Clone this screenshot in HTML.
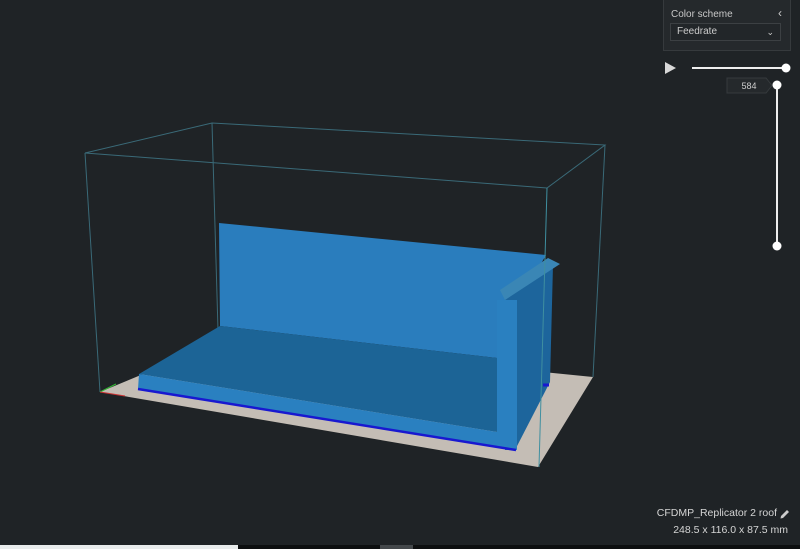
<!DOCTYPE html>
<html><head><meta charset="utf-8"><style>
html,body{margin:0;padding:0;background:#1f2326;width:800px;height:549px;overflow:hidden;font-family:"Liberation Sans",sans-serif;}
.panel{position:absolute;left:663px;top:-1px;width:126px;height:50px;background:#25292c;border:1px solid #363a3d;}
.lbl{position:absolute;left:7px;top:9px;font-size:10px;color:#c8c8c8;}
.chev{position:absolute;right:8px;top:6px;font-size:12px;color:#ccc;}
.sel{position:absolute;left:6px;top:23px;width:109px;height:16px;border:1px solid #3c4043;background:#222629;font-size:10px;color:#ccc;line-height:16px;text-indent:6px;}
.txt{position:absolute;right:12px;color:#d4d4d4;font-size:10.5px;}
</style></head><body>
<svg width="800" height="549" style="position:absolute;left:0;top:0">
<polygon points="100,392 538,467 593,377 225,340" fill="#c4bdb5"/>
<g stroke="#3a6a78" stroke-width="1" fill="none">
<polyline points="85,153 212,123 605,145 547,188 85,153"/>
<line x1="85" y1="153" x2="100" y2="392"/>
<line x1="212" y1="123" x2="218" y2="330"/>
<line x1="605" y1="145" x2="593" y2="377"/>
</g>
<polygon points="219,223 546,255 520,300 497,300 497,358 220,326" fill="#2a7dbd"/>
<polygon points="505,300 553,265 550,382 515,450 505,450" fill="#1d659c"/>
<polygon points="500,290 548,258 560,264 505,300" fill="#3a86b5"/>
<polygon points="220,326 497,358 497,432 139,374" fill="#1c6496"/>
<polygon points="139,374 497,432 497,300 517,300 517,450 138,389" fill="#2a80c0"/>
<line x1="138" y1="389" x2="516" y2="450" stroke="#1818d0" stroke-width="2.5"/>
<line x1="543" y1="385" x2="549" y2="385" stroke="#1818d0" stroke-width="3"/>
<line x1="547" y1="188" x2="539" y2="467" stroke="#3f8fa0" stroke-width="1"/>
<line x1="100" y1="392" x2="116" y2="384" stroke="#3b3" stroke-width="1"/>
<line x1="100" y1="392" x2="125" y2="396" stroke="#c33" stroke-width="1"/>
<rect x="0" y="545" width="238" height="4" fill="#e8ecec"/>
<rect x="238" y="545" width="562" height="4" fill="#0d0f10"/>
<rect x="380" y="545" width="33" height="4" fill="#44484b"/>
<polygon points="665,62 676,68 665,74" fill="#d8d8d8"/>
<line x1="692" y1="68" x2="786" y2="68" stroke="#eee" stroke-width="2"/>
<circle cx="786" cy="68" r="4.5" fill="#fff"/>
<polygon points="727,78 766,78 772,85.5 766,93 727,93" fill="#25292c" stroke="#363a3d"/>
<text x="749" y="89" font-size="9" fill="#ccc" text-anchor="middle" font-family="Liberation Sans">584</text>
<line x1="777" y1="85" x2="777" y2="246" stroke="#eee" stroke-width="2"/>
<circle cx="777" cy="85" r="4.5" fill="#fff"/>
<circle cx="777" cy="246" r="4.5" fill="#fff"/>
<path d="M781,516 l6,-6 l2,2 l-6,6 l-2.5,0.5 z" fill="#ccc"/>
</svg>
<div class="panel"><div class="lbl">Color scheme</div><div class="chev">‹</div><div class="sel">Feedrate<span style="position:absolute;right:6px;top:0;font-size:9px">⌄</span></div></div>
<div class="txt" style="top:507px;right:23px">CFDMP_Replicator 2 roof</div>
<div class="txt" style="top:524px">248.5 x 116.0 x 87.5 mm</div>
</body></html>
